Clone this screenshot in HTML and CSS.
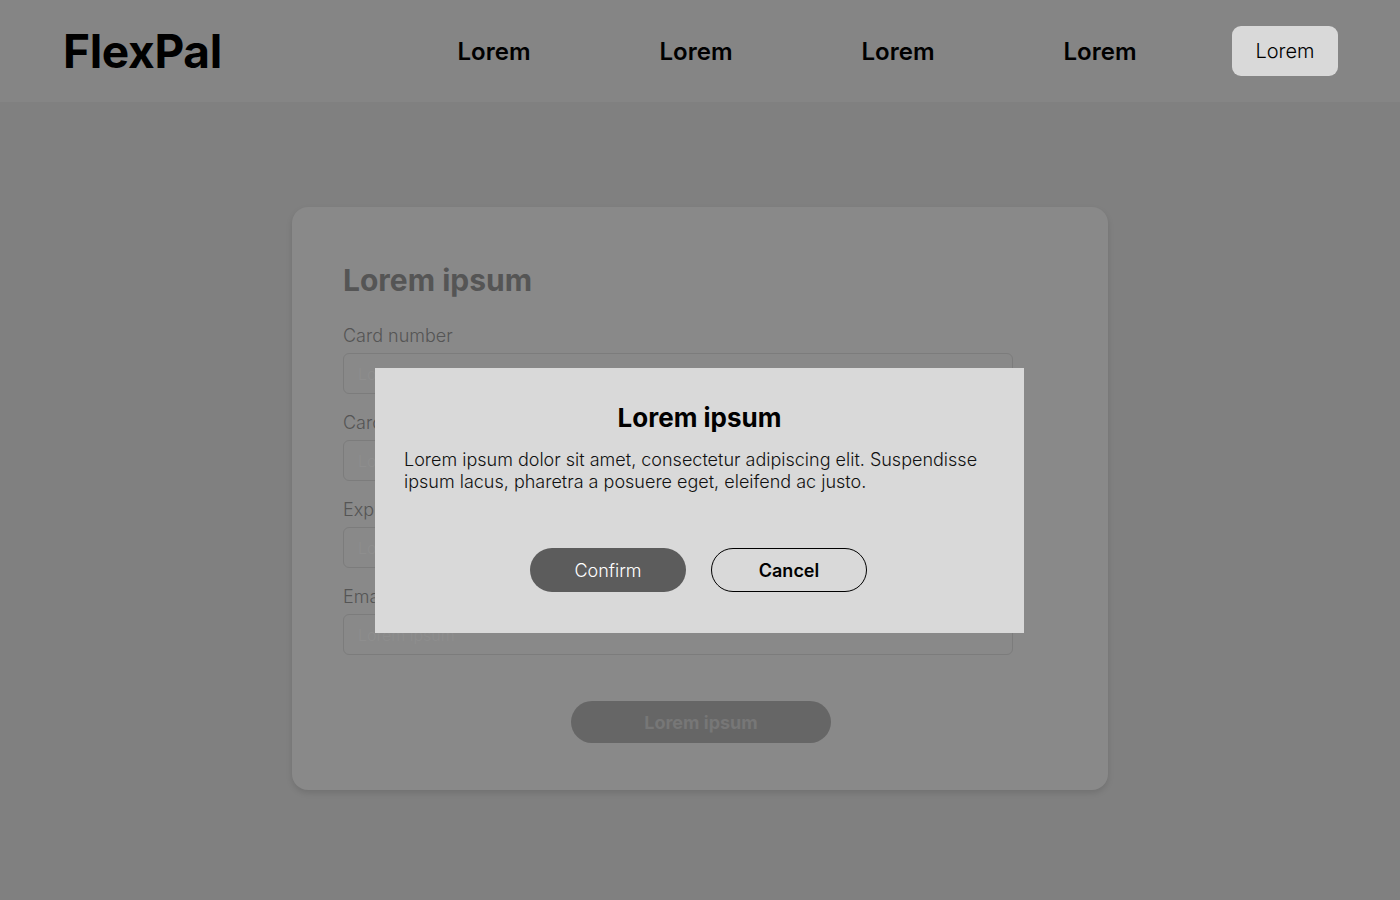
FILE: index.html
```html
<!DOCTYPE html>
<html lang="en">
<head>
<meta charset="utf-8">
<title>FlexPal</title>
<link rel="stylesheet" href="styles.css">
</head>
<body>
<header class="topbar">
  <div class="logo">FlexPal</div>
  <nav class="nav">
    <a class="nav-link">Lorem</a>
    <a class="nav-link">Lorem</a>
    <a class="nav-link">Lorem</a>
    <a class="nav-link">Lorem</a>
    <a class="nav-btn">Lorem</a>
  </nav>
</header>
<main class="main">
  <section class="card">
    <h1 class="card-title">Lorem ipsum</h1>
    <div class="field">
      <label class="label">Card number</label>
      <div class="input">Lorem ipsum</div>
    </div>
    <div class="field">
      <label class="label">Card holder</label>
      <div class="input">Lorem ipsum</div>
    </div>
    <div class="field">
      <label class="label">Expiry date</label>
      <div class="input">Lorem ipsum</div>
    </div>
    <div class="field">
      <label class="label">Email</label>
      <div class="input">Lorem ipsum</div>
    </div>
    <div class="submit-row">
      <button class="submit">Lorem ipsum</button>
    </div>
  </section>
</main>
<div class="modal">
  <h2 class="modal-title">Lorem ipsum</h2>
  <p class="modal-text">Lorem ipsum dolor sit amet, consectetur adipiscing elit. Suspendisse ipsum lacus, pharetra a posuere eget, eleifend ac justo.</p>
  <div class="modal-actions">
    <button class="btn btn-confirm">Confirm</button>
    <button class="btn btn-cancel">Cancel</button>
  </div>
</div>
</body>
</html>
```
FILE: styles.css
```css
* { box-sizing: border-box; }
html, body { margin: 0; padding: 0; }
body {
  background: #808080;
  font-family: Inter, "Noto Sans", sans-serif;
  width: 1400px;
  height: 900px;
  overflow: hidden;
  position: relative;
}
.topbar {
  height: 102px;
  background: #858585;
  display: flex;
  align-items: center;
  padding: 0 62px 0 63px;
}
.logo {
  font-size: 46px;
  font-weight: 700;
  color: #000;
  letter-spacing: -0.3px;
  flex: 1;
}
.nav {
  display: flex;
  align-items: center;
}
.nav-link {
  font-size: 24px;
  font-weight: 600;
  color: #000;
  width: 202px;
  text-align: center;
}
.nav-btn {
  margin-left: 31px;
  width: 106px;
  height: 50px;
  background: #d9d9d9;
  border-radius: 9px;
  display: flex;
  align-items: center;
  justify-content: center;
  font-size: 20px;
  font-weight: 300;
  color: #000;
}
.main {
  display: flex;
  justify-content: center;
  padding-top: 105px;
}
.card {
  width: 816px;
  height: 583px;
  background: #898989;
  border-radius: 16px;
  box-shadow: 0 3px 6px rgba(0,0,0,0.12);
  padding: 55px 95px 0 51px;
}
.card-title {
  margin: 0 0 27px;
  font-size: 30px;
  font-weight: 700;
  color: #555;
  line-height: 36px;
}
.field { margin-bottom: 18px; }
.label {
  display: block;
  font-size: 18px;
  font-weight: 300;
  color: #555;
  line-height: 22px;
  margin-bottom: 6px;
}
.input {
  height: 41px;
  border: 1px solid #7c7c7c;
  border-radius: 6px;
  padding: 0 14px;
  display: flex;
  align-items: center;
  font-size: 16px;
  font-weight: 300;
  color: #8e8e8e;
}
.submit-row {
  display: flex;
  justify-content: center;
  padding-top: 28px;
  margin-right: -46px;
}
.submit {
  width: 260px;
  height: 42px;
  border: none;
  border-radius: 21px;
  background: #666;
  color: #777;
  font-family: inherit;
  font-size: 18px;
  font-weight: 700;
}
.modal {
  position: absolute;
  left: 375px;
  top: 368px;
  width: 649px;
  height: 265px;
  background: #d9d9d9;
  padding: 34px 29px 0;
}
.modal-title {
  margin: 0;
  text-align: center;
  font-size: 26px;
  font-weight: 700;
  line-height: 32px;
  color: #000;
}
.modal-text {
  margin: 15px 0 0;
  font-size: 18px;
  font-weight: 300;
  line-height: 22px;
  color: #111;
}
.modal-actions {
  display: flex;
  justify-content: center;
  gap: 25px;
  margin-top: 55px;
  padding-right: 2px;
}
.btn {
  width: 156px;
  height: 44px;
  border-radius: 22px;
  font-family: inherit;
  font-size: 18px;
}
.btn-confirm {
  background: #5c5c5c;
  color: #fff;
  border: none;
  font-weight: 300;
}
.btn-cancel {
  background: transparent;
  border: 1px solid #000;
  color: #000;
  font-weight: 600;
}
```
